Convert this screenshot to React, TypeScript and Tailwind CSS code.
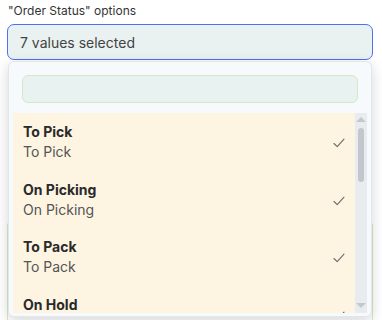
import React from 'react';

const items = [
  { title: 'To Pick', sub: 'To Pick' },
  { title: 'On Picking', sub: 'On Picking' },
  { title: 'To Pack', sub: 'To Pack' },
  { title: 'On Hold', sub: 'On Hold' },
];

const Check = () => (
  <svg width="12" height="10" viewBox="0 0 12 10" fill="none" className="shrink-0">
    <path d="M1 5.5 L4.2 8.6 L11 1.2" stroke="#6b6b6b" strokeWidth="1.1" strokeLinecap="round" strokeLinejoin="round" />
  </svg>
);

export default function App() {
  return (
    <div
      className="relative w-[382px] h-[320px] overflow-hidden bg-white px-[7px] pt-[3px]"
      style={{ fontFamily: 'Inter, "Noto Sans", sans-serif' }}
    >
      {/* Field label + closed select */}
      <div className="text-[12px] leading-[16px] text-[#333] pl-[1px]">"Order Status" options</div>
      <div className="mt-[5px] h-[36px] w-[366px] rounded-[7px] border border-[#4d6ef5] bg-[#e9f1f1] px-[12px] flex items-center text-[14px] text-[#444]">
        7 values selected
      </div>

      {/* Content below, covered by the menu */}
      <div className="mt-[40px] h-[220px] w-[366px] rounded-[6px] border-x border-[#d9e7c6] pl-[32px] pr-[10px]">
        <div className="mt-[160px] h-[80px] border-x border-[#d9e7c6]" />
      </div>

      {/* Dropdown menu */}
      <div className="absolute left-[8px] top-[61px] w-[364px] h-[256px] rounded-[6px] border border-[#e2e7eb] bg-[#f6fafc] shadow-[0_4px_14px_rgba(0,0,0,0.16)] flex flex-col">
        <div className="mx-[13px] mt-[13px] h-[28px] rounded-[6px] border border-[#d8e7c8] bg-[#e8f2f0]" />
        <div className="mx-[4px] mt-[10px] h-[200px] flex overflow-hidden">
          <div className="flex-1 bg-[#fdf4e2] overflow-hidden">
            {items.map((it) => (
              <div key={it.title} className="h-[57.5px] pl-[10px] pr-[10px] pt-[9px] flex items-start">
                <div className="flex-1">
                  <div className="text-[14px] leading-[20px] font-bold text-[#2a2a2a]">{it.title}</div>
                  <div className="text-[14px] leading-[20px] text-[#555]">{it.sub}</div>
                </div>
                <div className="mt-[16px]">
                  <Check />
                </div>
              </div>
            ))}
          </div>
          <div className="w-[12px] bg-[#e9ecef] flex flex-col items-center">
            <div className="mt-[4px] w-0 h-0 border-l-[5px] border-r-[5px] border-b-[5px] border-l-transparent border-r-transparent border-b-[#c4c7cc]" />
            <div className="mt-[6px] w-[6px] h-[54px] rounded-full bg-[#c3c6cc]" />
            <div className="flex-1" />
            <div className="mb-[5px] w-0 h-0 border-l-[5px] border-r-[5px] border-t-[5px] border-l-transparent border-r-transparent border-t-[#c4c7cc]" />
          </div>
        </div>
      </div>
    </div>
  );
}
